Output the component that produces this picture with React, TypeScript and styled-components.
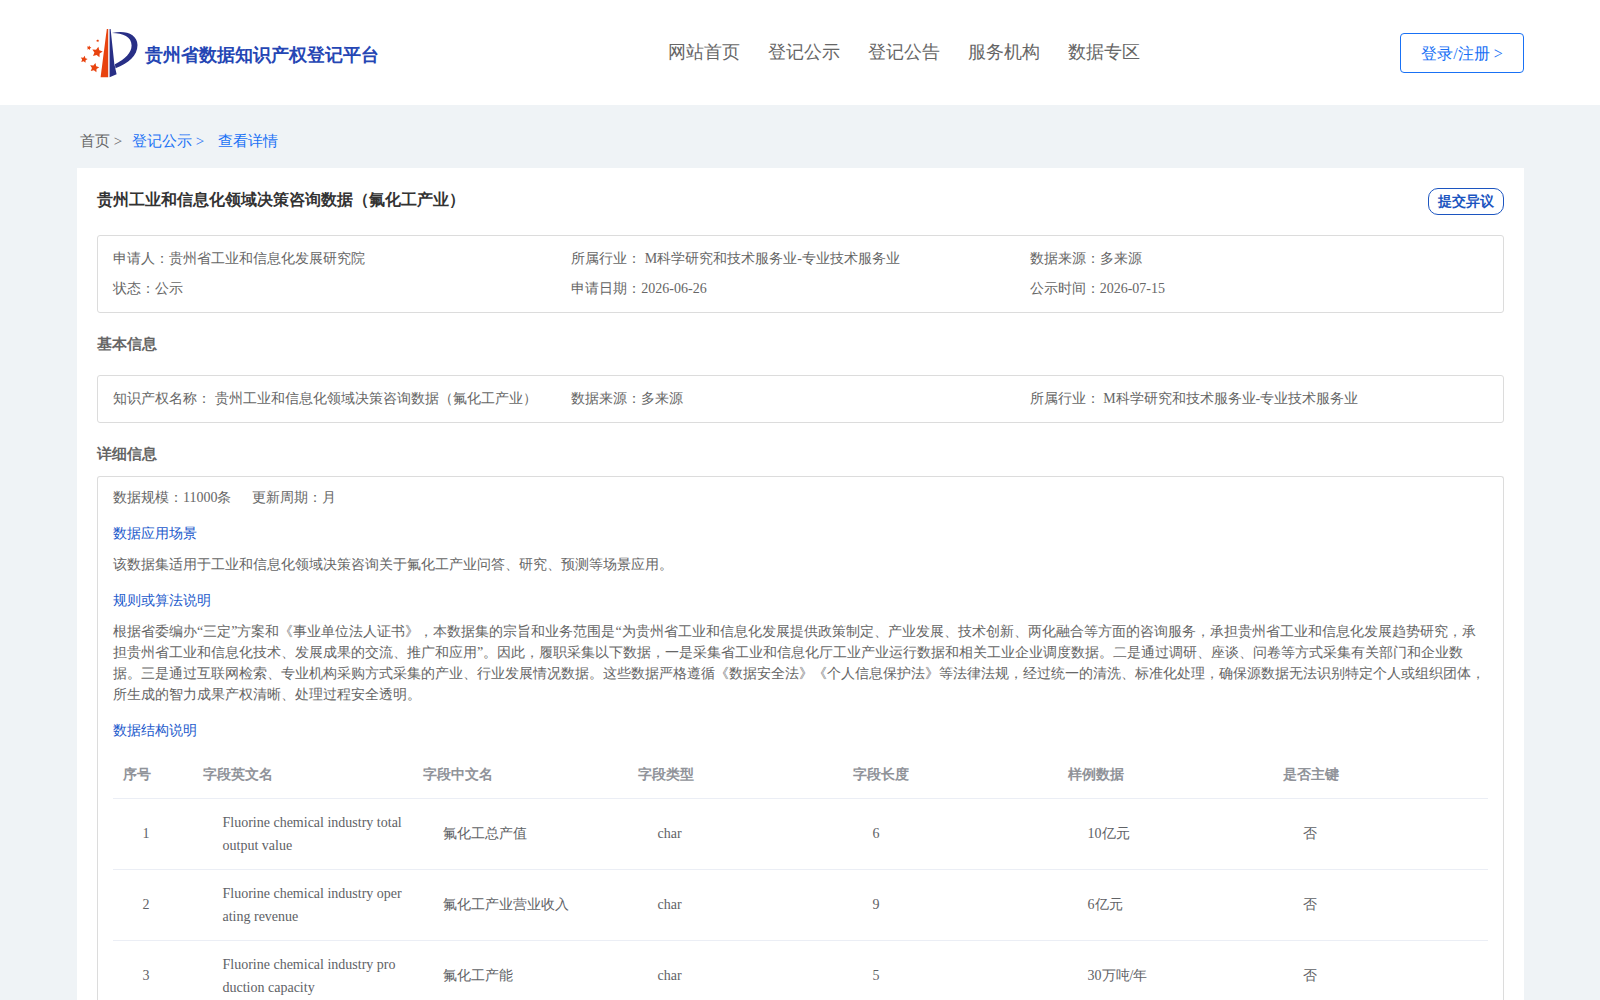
import React from "react";
import styled, { createGlobalStyle } from "styled-components";

const GlobalStyle = createGlobalStyle`
  * { box-sizing: border-box; }
  html, body { margin: 0; padding: 0; }
  body {
    background: #eff3f6;
    color: #666;
    font-family: "Liberation Serif", serif;
    font-size: 14px;
  }
`;

const Page = styled.div`
  display: flex;
  flex-direction: column;
  height: 1000px;
  overflow: hidden;
`;

const Header = styled.header`
  display: flex;
  flex-shrink: 0;
  justify-content: space-between;
  height: 105px;
  padding: 0 76px 0 80px;
  background: #fff;
`;

const Brand = styled.div`
  display: flex;
  align-items: center;
  gap: 7px;
  width: 588px;
`;

const BrandName = styled.h1`
  margin: 5px 0 0;
  color: #2546b4;
  font-size: 18px;
  line-height: 24px;
  font-weight: bold;
`;

const Nav = styled.nav`
  display: flex;
  gap: 28px;
  flex: 1;
  padding-top: 40px;
  font-size: 18px;
  line-height: 24px;
`;

const NavItem = styled.a`
  color: #666;
`;

const LoginButton = styled.button`
  width: 124px;
  height: 40px;
  margin-top: 33px;
  padding: 2px 0 0;
  border: 1px solid #1971f5;
  border-radius: 4px;
  background: #fff;
  color: #1971f5;
  font: inherit;
  font-size: 16px;
`;

const Breadcrumb = styled.div`
  display: flex;
  flex-shrink: 0;
  height: 63px;
  padding: 26px 0 0 80px;
  font-size: 15px;
  line-height: 20px;
`;

const Crumb = styled.span<{ $active?: boolean; $gap?: number }>`
  color: ${(p) => (p.$active ? "#1971f5" : "#666")};
  margin-right: ${(p) => p.$gap ?? 0}px;
`;

const Card = styled.main`
  display: flex;
  flex-direction: column;
  flex: 1;
  min-height: 0;
  width: 1447px;
  margin-left: 77px;
  padding: 20px 20px 0;
  background: #fff;
`;

const CardHead = styled.div`
  display: flex;
  flex-shrink: 0;
  justify-content: space-between;
  height: 47px;
`;

const CardTitle = styled.h2`
  margin: 0;
  color: #333;
  font-size: 16px;
  line-height: 24px;
`;

const ObjectionButton = styled.button`
  width: 76px;
  height: 27px;
  padding: 0;
  border: 1px solid #1c55c0;
  border-radius: 10px;
  background: #fff;
  color: #1c55c0;
  font: inherit;
  font-weight: bold;
`;

const InfoBox = styled.section`
  display: grid;
  flex-shrink: 0;
  grid-template-columns: repeat(3, 1fr);
  padding: 8px 15px;
  border: 1px solid #dcdcdc;
  border-radius: 3px;
  line-height: 30px;
`;

const SectionTitle = styled.h3<{ $height: number; $top: number }>`
  flex-shrink: 0;
  height: ${(p) => p.$height}px;
  margin: 0;
  padding-top: ${(p) => p.$top}px;
  font-size: 15px;
  line-height: 20px;
`;

const DetailBox = styled.section`
  flex: 1;
  min-height: 0;
  padding: 10px 15px 0;
  border: 1px solid #dcdcdc;
  border-bottom: 0;
  border-radius: 3px 3px 0 0;
  overflow: hidden;
  line-height: 21px;
`;

const Stats = styled.div`
  display: flex;
  gap: 21px;
`;

const SubTitle = styled.h4`
  margin: 15px 0 10px;
  color: #1c5acc;
  font-size: 14px;
  font-weight: normal;
`;

const Paragraph = styled.p`
  margin: 0;
`;

const Table = styled.table`
  width: 1375px;
  table-layout: fixed;
  border-collapse: separate;
  border-spacing: 0;
  line-height: 23px;
  word-break: break-all;
`;

const HeadCell = styled.th<{ $width: number }>`
  width: ${(p) => p.$width}px;
  padding: 12px 10px;
  border-bottom: 1px solid #ebeef5;
  color: #909399;
  text-align: left;
`;

const Cell = styled.td<{ $wrap?: boolean }>`
  padding: ${(p) => (p.$wrap ? "12px 10.5px 12px 29.5px" : "11px 10.5px 13px 29.5px")};
  border-bottom: 1px solid #ebeef5;
  color: #606266;
`;

const columns: [string, number][] = [
  ["序号", 80],
  ["字段英文名", 220],
  ["字段中文名", 215],
  ["字段类型", 215],
  ["字段长度", 215],
  ["样例数据", 215],
  ["是否主键", 215],
];

const rows = [
  ["1", "Fluorine chemical industry total output value", "氟化工总产值", "char", "6", "10亿元", "否"],
  ["2", "Fluorine chemical industry operating revenue", "氟化工产业营业收入", "char", "9", "6亿元", "否"],
  ["3", "Fluorine chemical industry production capacity", "氟化工产能", "char", "5", "30万吨/年", "否"],
];

const stars = [
  { x: 17.2, y: 25.2, r: 5.6 },
  { x: 4, y: 32.4, r: 3.7 },
  { x: 14.4, y: 40.8, r: 4.9 },
  { x: 9, y: 20.8, r: 2.4 },
  { x: 17.7, y: 13.8, r: 1.6 },
];

const starPoints = (x: number, y: number, r: number) =>
  Array.from({ length: 10 }, (_, i) => {
    const a = ((i * 36 - 78) * Math.PI) / 180;
    const d = i % 2 ? r * 0.5 : r;
    return `${x + d * Math.cos(a)},${y + d * Math.sin(a)}`;
  }).join(" ");

const Logo = () => (
  <svg width="58" height="52" viewBox="0 0 58 52">
    {stars.map((s) => (
      <polygon key={s.x} points={starPoints(s.x, s.y, s.r)} fill="#e8430f" />
    ))}
    <path d="M26.8 2h1.4v48.300h-7.600z" fill="#e8430f" />
    <path d="M29.600 2h1l3.700 34.800 2.300 10.400-7 3z" fill="#282f86" />
    <path d="M32 6C45 2.800 57.500 7 57.500 18c0 10.500-9 18.500-22 23.200l-.6-4C45 32 51.600 26 51.600 18.500 51.600 9.500 43 6.200 32 6z" fill="#282f86" />
  </svg>
);

export default function App() {
  return (
    <Page>
      <GlobalStyle />
      <Header>
        <Brand>
          <Logo />
          <BrandName>贵州省数据知识产权登记平台</BrandName>
        </Brand>
        <Nav>
          {["网站首页", "登记公示", "登记公告", "服务机构", "数据专区"].map((n) => (
            <NavItem key={n}>{n}</NavItem>
          ))}
        </Nav>
        <LoginButton>登录/注册 &gt;</LoginButton>
      </Header>
      <Breadcrumb>
        <Crumb $gap={9.8}>首页 &gt;</Crumb>
        <Crumb $active $gap={13.8}>登记公示 &gt;</Crumb>
        <Crumb $active>查看详情</Crumb>
      </Breadcrumb>
      <Card>
        <CardHead>
          <CardTitle>贵州工业和信息化领域决策咨询数据（氟化工产业）</CardTitle>
          <ObjectionButton>提交异议</ObjectionButton>
        </CardHead>
        <InfoBox>
          <span>申请人：贵州省工业和信息化发展研究院</span>
          <span>所属行业： M科学研究和技术服务业-专业技术服务业</span>
          <span>数据来源：多来源</span>
          <span>状态：公示</span>
          <span>申请日期：2026-06-26</span>
          <span>公示时间：2026-07-15</span>
        </InfoBox>
        <SectionTitle $height={62} $top={21}>基本信息</SectionTitle>
        <InfoBox>
          <span>知识产权名称： 贵州工业和信息化领域决策咨询数据（氟化工产业）</span>
          <span>数据来源：多来源</span>
          <span>所属行业： M科学研究和技术服务业-专业技术服务业</span>
        </InfoBox>
        <SectionTitle $height={53} $top={21}>详细信息</SectionTitle>
        <DetailBox>
          <Stats>
            <span>数据规模：11000条</span>
            <span>更新周期：月</span>
          </Stats>
          <SubTitle>数据应用场景</SubTitle>
          <Paragraph>该数据集适用于工业和信息化领域决策咨询关于氟化工产业问答、研究、预测等场景应用。</Paragraph>
          <SubTitle>规则或算法说明</SubTitle>
          <Paragraph>
            根据省委编办“三定”方案和《事业单位法人证书》，本数据集的宗旨和业务范围是“为贵州省工业和信息化发展提供政策制定、产业发展、技术创新、两化融合等方面的咨询服务，承担贵州省工业和信息化发展趋势研究，承担贵州省工业和信息化技术、发展成果的交流、推广和应用”。因此，履职采集以下数据，一是采集省工业和信息化厅工业产业运行数据和相关工业企业调度数据。二是通过调研、座谈、问卷等方式采集有关部门和企业数据。三是通过互联网检索、专业机构采购方式采集的产业、行业发展情况数据。这些数据严格遵循《数据安全法》《个人信息保护法》等法律法规，经过统一的清洗、标准化处理，确保源数据无法识别特定个人或组织团体，所生成的智力成果产权清晰、处理过程安全透明。
          </Paragraph>
          <SubTitle>数据结构说明</SubTitle>
          <Table>
            <thead>
              <tr>
                {columns.map(([label, width]) => (
                  <HeadCell key={label} $width={width}>{label}</HeadCell>
                ))}
              </tr>
            </thead>
            <tbody>
              {rows.map((row) => (
                <tr key={row[0]}>
                  {row.map((v, i) => (
                    <Cell key={i} $wrap={i === 1}>{v}</Cell>
                  ))}
                </tr>
              ))}
            </tbody>
          </Table>
        </DetailBox>
      </Card>
    </Page>
  );
}
